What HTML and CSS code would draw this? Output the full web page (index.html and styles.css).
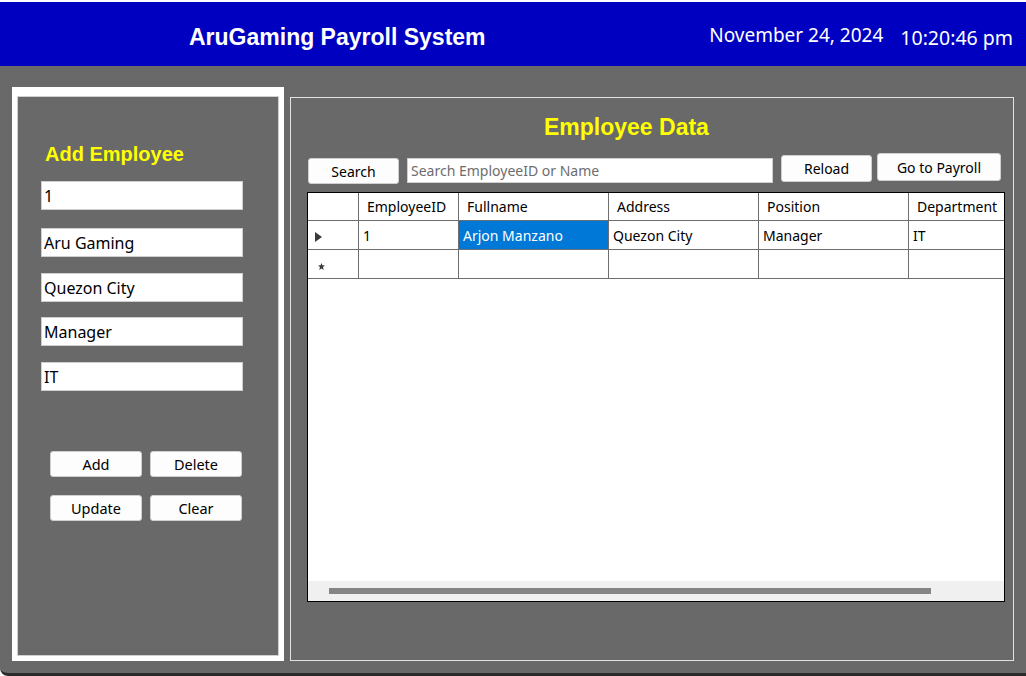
FILE: index.html
```html
<!DOCTYPE html>
<html>
<head>
<meta charset="utf-8">
<title>AruGaming Payroll System</title>
<link rel="stylesheet" href="styles.css">
</head>
<body>
<div class="window">
  <header class="topbar">
    <h1 class="app-title">AruGaming Payroll System</h1>
    <div class="date">November 24, 2024</div>
    <div class="time">10:20:46 pm</div>
  </header>
  <main class="workspace">
    <section class="add-panel">
      <h2 class="add-title">Add Employee</h2>
      <input class="field f1" type="text" value="1">
      <input class="field f2" type="text" value="Aru Gaming">
      <input class="field f3" type="text" value="Quezon City">
      <input class="field f4" type="text" value="Manager">
      <input class="field f5" type="text" value="IT">
      <div class="actions">
        <button class="btn">Add</button>
        <button class="btn">Delete</button>
        <button class="btn">Update</button>
        <button class="btn">Clear</button>
      </div>
    </section>
    <section class="data-panel">
      <h2 class="data-title">Employee Data</h2>
      <div class="toolbar">
        <button class="tbtn search-btn">Search</button>
        <input class="search-box" type="text" placeholder="Search EmployeeID or Name">
        <button class="tbtn reload-btn">Reload</button>
        <button class="tbtn payroll-btn">Go to Payroll</button>
      </div>
      <div class="grid">
        <div class="grid-row head">
          <div class="cell rh"></div>
          <div class="cell c-id">EmployeeID</div>
          <div class="cell c-w">Fullname</div>
          <div class="cell c-w">Address</div>
          <div class="cell c-w">Position</div>
          <div class="cell c-w">Department</div>
        </div>
        <div class="grid-row">
          <div class="cell rh"><span class="arrow"></span></div>
          <div class="cell c-id">1</div>
          <div class="cell c-w selected">Arjon Manzano</div>
          <div class="cell c-w">Quezon City</div>
          <div class="cell c-w">Manager</div>
          <div class="cell c-w">IT</div>
        </div>
        <div class="grid-row">
          <div class="cell rh"><svg class="star" width="7" height="7" viewBox="0 0 7 7"><polygon points="3.5,0 4.4,2.3 7,2.5 5,4.1 5.7,7 3.5,5.4 1.3,7 2,4.1 0,2.5 2.6,2.3" fill="#3a3a3a"/></svg></div>
          <div class="cell c-id"></div>
          <div class="cell c-w"></div>
          <div class="cell c-w"></div>
          <div class="cell c-w"></div>
          <div class="cell c-w"></div>
        </div>
        <div class="grid-fill"></div>
        <div class="hscroll"><div class="thumb"></div></div>
      </div>
    </section>
  </main>
</div>
</body>
</html>
```

FILE: styles.css
```css
* { box-sizing: border-box; }

html, body {
  margin: 0;
  padding: 0;
  background: #ffffff;
}

body {
  padding-top: 2px;
  font-family: "Noto Sans", "Open Sans", sans-serif;
}

.window {
  width: 1026px;
  height: 674px;
  display: flex;
  flex-direction: column;
  background: #696969;
  border-bottom: 3px solid #2b2b2b;
  border-bottom-left-radius: 8px;
  overflow: hidden;
}

.topbar {
  height: 64px;
  flex: none;
  background: #0000c0;
  display: flex;
  align-items: flex-start;
  color: #ffffff;
}

.app-title {
  margin: 22px 0 0 189px;
  font-family: "Liberation Sans", Arial, sans-serif;
  font-weight: bold;
  font-size: 23px;
  line-height: 26px;
}

.date {
  margin: 24px 0 0 auto;
  font-size: 19px;
  line-height: 19px;
}

.time {
  margin: 26px 13px 0 17px;
  font-size: 19.5px;
  line-height: 20px;
}

.workspace {
  flex: 1;
  display: flex;
  align-items: flex-start;
  gap: 6px;
  padding: 21px 0 0 12px;
}

.add-panel {
  width: 272px;
  height: 574px;
  flex: none;
  border: 5px solid #ffffff;
  border-top-width: 9px;
  box-shadow: inset 0 0 0 1px #d0d0d0;
  padding: 0 0 0 24px;
  display: flex;
  flex-direction: column;
  align-items: flex-start;
}

.add-title {
  margin: 46px 0 0 4px;
  color: #ffff00;
  font-family: "Liberation Sans", Arial, sans-serif;
  font-weight: bold;
  font-size: 20px;
  line-height: 24px;
}

.field {
  width: 202px;
  height: 29px;
  border: 1px solid #cfcfcf;
  background: #ffffff;
  padding: 0 2px;
  font-family: "Noto Sans", sans-serif;
  font-size: 16px;
  color: #000000;
  outline: none;
}

.f1 { margin-top: 15px; }
.f2 { margin-top: 18px; }
.f3 { margin-top: 16px; }
.f4 { margin-top: 15px; }
.f5 { margin-top: 16px; }

.actions {
  margin: 60px 0 0 9px;
  display: grid;
  grid-template-columns: 92px 92px;
  column-gap: 8px;
  row-gap: 18px;
}

.btn, .tbtn {
  background: #fdfdfd;
  border: 1px solid #d0d0d0;
  border-radius: 3px;
  font-family: "Noto Sans", sans-serif;
  color: #000000;
  padding: 0;
}

.btn {
  height: 26px;
  font-size: 14.5px;
}

.data-panel {
  width: 724px;
  height: 564px;
  flex: none;
  margin-top: 10px;
  border: 1px solid #e2e2e2;
  display: flex;
  flex-direction: column;
}

.data-title {
  margin: 16px 0 0 253px;
  color: #ffff00;
  font-family: "Liberation Sans", Arial, sans-serif;
  font-weight: bold;
  font-size: 23px;
  line-height: 26px;
}

.toolbar {
  margin: 13px 0 0 17px;
  height: 31px;
  display: flex;
  align-items: flex-start;
}

.tbtn {
  font-size: 14px;
}

.search-btn {
  width: 91px;
  height: 26px;
  margin-top: 5px;
}

.search-box {
  width: 366px;
  height: 25px;
  margin: 5px 0 0 8px;
  border: 1px solid #cfcfcf;
  background: #ffffff;
  padding: 0 3px;
  font-family: "Noto Sans", sans-serif;
  font-size: 14px;
  outline: none;
}

.search-box::placeholder {
  color: #6d6d6d;
}

.reload-btn {
  width: 91px;
  height: 27px;
  margin: 2px 0 0 8px;
}

.payroll-btn {
  width: 124px;
  height: 28px;
  margin-left: 5px;
}

.grid {
  margin: 8px 0 0 16px;
  width: 698px;
  height: 410px;
  border: 1px solid #000000;
  background: #ffffff;
  display: flex;
  flex-direction: column;
  overflow: hidden;
}

.grid-row {
  display: flex;
  flex: none;
  height: 29px;
  border-bottom: 1px solid #6e6e6e;
}

.grid-row.head {
  height: 28px;
}

.cell {
  flex: none;
  height: 100%;
  border-right: 1px solid #6e6e6e;
  display: flex;
  align-items: center;
  padding-left: 4px;
  font-size: 14px;
  color: #000000;
  white-space: nowrap;
}

.head .cell {
  padding-left: 8px;
}

.cell.rh { width: 51px; padding-left: 7px; }
.cell.c-id { width: 100px; }
.cell.c-w { width: 150px; }

.cell.selected {
  background: #0078d7;
  color: #ffffff;
}

.arrow {
  width: 0;
  height: 0;
  margin-top: 4px;
  border-top: 5px solid transparent;
  border-bottom: 5px solid transparent;
  border-left: 7px solid #3a3a3a;
}

.star {
  margin: 4px 0 0 3px;
}

.grid-fill {
  flex: 1;
}

.hscroll {
  flex: none;
  height: 20px;
  background: #f0f0f0;
  padding: 7px 0 0 21px;
}

.thumb {
  width: 602px;
  height: 6px;
  background: #858585;
}
```
